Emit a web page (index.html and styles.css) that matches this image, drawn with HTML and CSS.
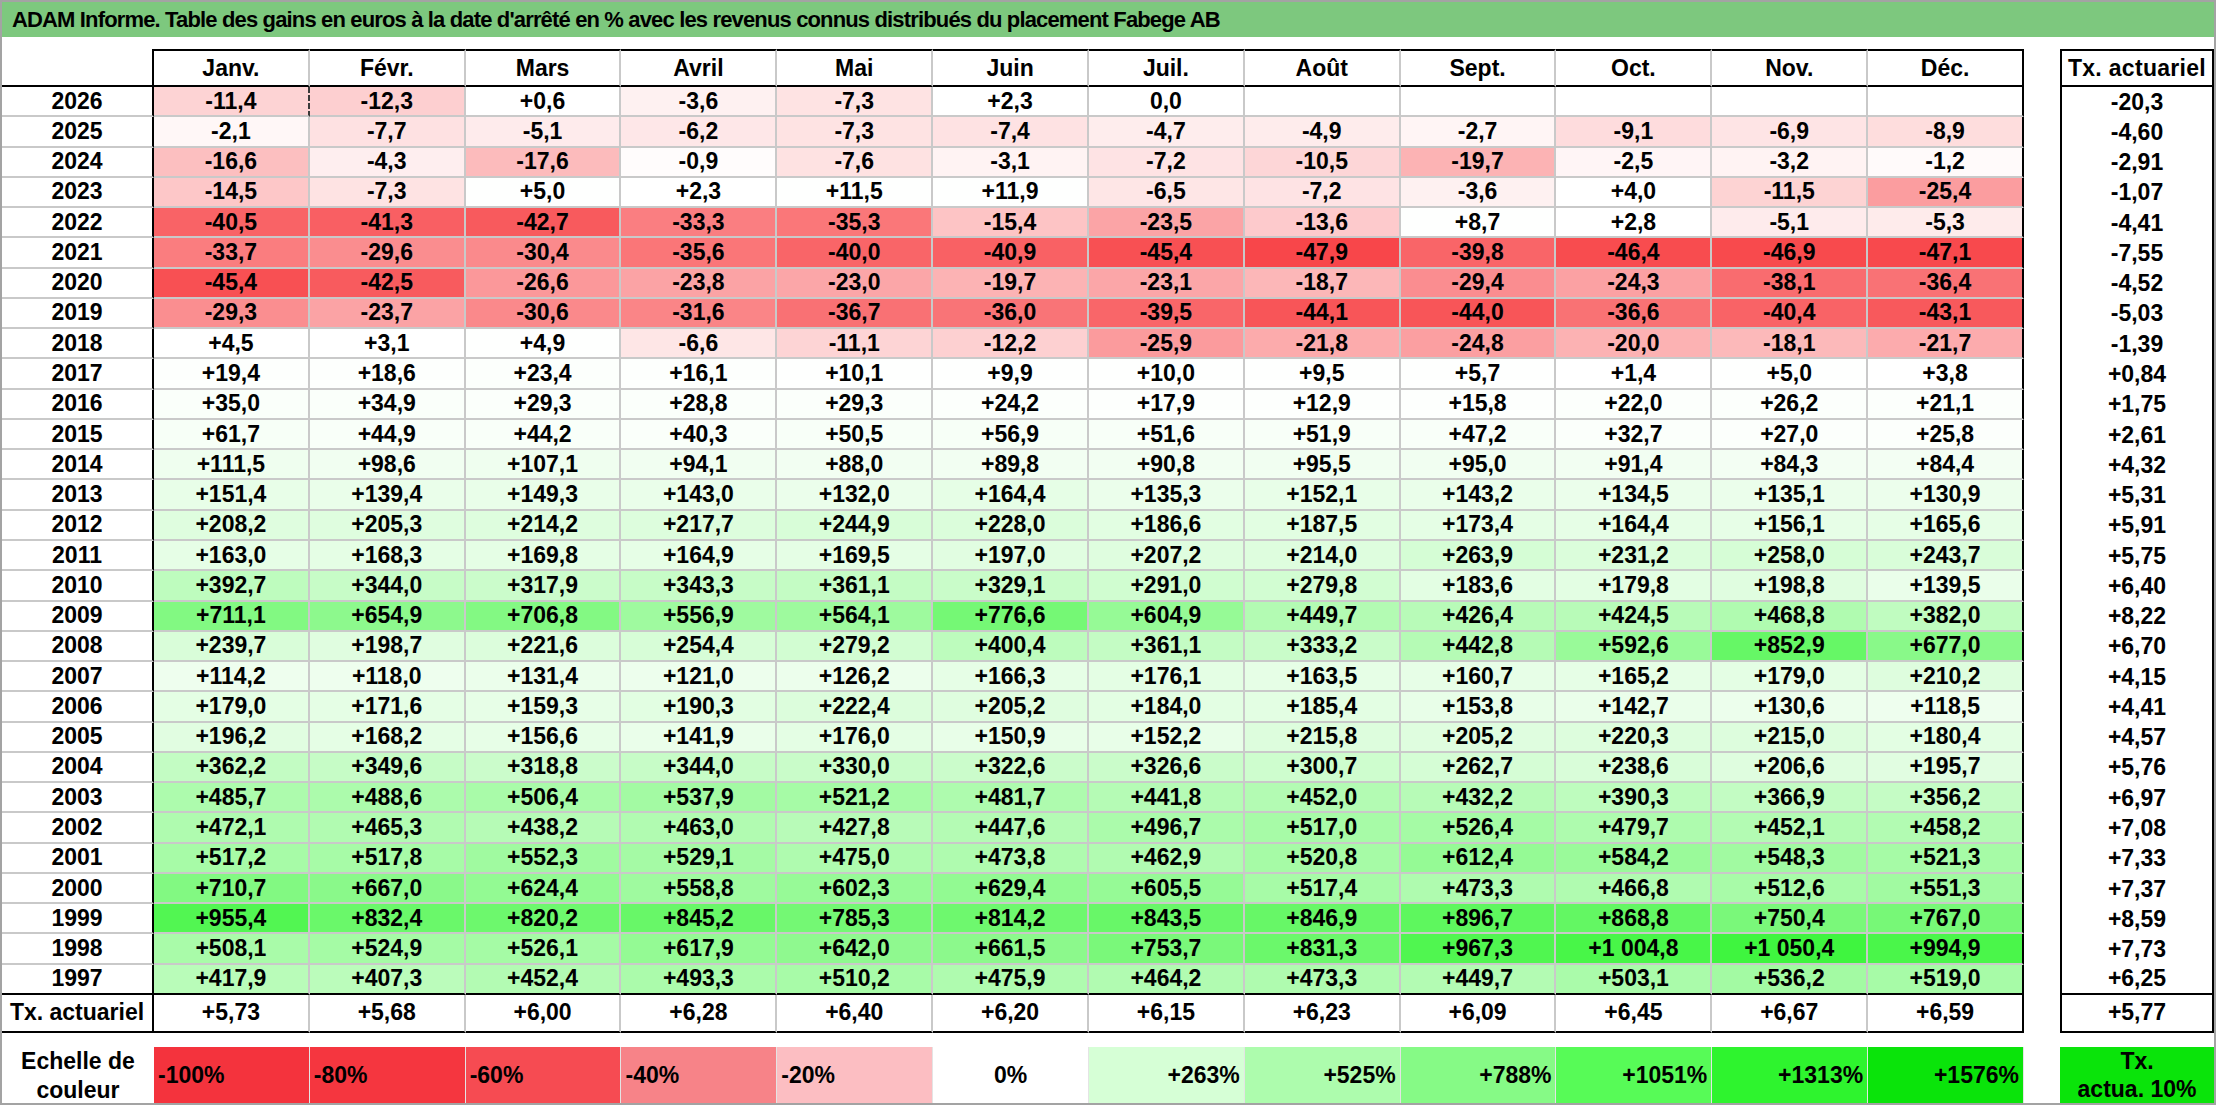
FILE: index.html
```html
<!DOCTYPE html>
<html lang="fr">
<head>
<meta charset="utf-8">
<title>ADAM Informe – Fabege AB</title>
<link rel="stylesheet" href="styles.css">
</head>
<body>
<div class="sheet">
  <div class="title">ADAM Informe. Table des gains en euros à la date d'arrêté en % avec les revenus connus distribués du placement Fabege AB</div>
  <div class="tables">
    <div class="main">
      <div class="row head"><div class="y"></div><div>Janv.</div><div>Févr.</div><div>Mars</div><div>Avril</div><div>Mai</div><div>Juin</div><div>Juil.</div><div>Août</div><div>Sept.</div><div>Oct.</div><div>Nov.</div><div>Déc.</div></div>
      <div class="row"><div class="y">2026</div><div class="v dash">-11,4</div><div class="v">-12,3</div><div class="v">+0,6</div><div class="v">-3,6</div><div class="v">-7,3</div><div class="v">+2,3</div><div class="v">0,0</div><div class="v"></div><div class="v"></div><div class="v"></div><div class="v"></div><div class="v"></div></div>
      <div class="row"><div class="y">2025</div><div class="v">-2,1</div><div class="v">-7,7</div><div class="v">-5,1</div><div class="v">-6,2</div><div class="v">-7,3</div><div class="v">-7,4</div><div class="v">-4,7</div><div class="v">-4,9</div><div class="v">-2,7</div><div class="v">-9,1</div><div class="v">-6,9</div><div class="v">-8,9</div></div>
      <div class="row"><div class="y">2024</div><div class="v">-16,6</div><div class="v">-4,3</div><div class="v">-17,6</div><div class="v">-0,9</div><div class="v">-7,6</div><div class="v">-3,1</div><div class="v">-7,2</div><div class="v">-10,5</div><div class="v">-19,7</div><div class="v">-2,5</div><div class="v">-3,2</div><div class="v">-1,2</div></div>
      <div class="row"><div class="y">2023</div><div class="v">-14,5</div><div class="v">-7,3</div><div class="v">+5,0</div><div class="v">+2,3</div><div class="v">+11,5</div><div class="v">+11,9</div><div class="v">-6,5</div><div class="v">-7,2</div><div class="v">-3,6</div><div class="v">+4,0</div><div class="v">-11,5</div><div class="v">-25,4</div></div>
      <div class="row"><div class="y">2022</div><div class="v">-40,5</div><div class="v">-41,3</div><div class="v">-42,7</div><div class="v">-33,3</div><div class="v">-35,3</div><div class="v">-15,4</div><div class="v">-23,5</div><div class="v">-13,6</div><div class="v">+8,7</div><div class="v">+2,8</div><div class="v">-5,1</div><div class="v">-5,3</div></div>
      <div class="row"><div class="y">2021</div><div class="v">-33,7</div><div class="v">-29,6</div><div class="v">-30,4</div><div class="v">-35,6</div><div class="v">-40,0</div><div class="v">-40,9</div><div class="v">-45,4</div><div class="v">-47,9</div><div class="v">-39,8</div><div class="v">-46,4</div><div class="v">-46,9</div><div class="v">-47,1</div></div>
      <div class="row"><div class="y">2020</div><div class="v">-45,4</div><div class="v">-42,5</div><div class="v">-26,6</div><div class="v">-23,8</div><div class="v">-23,0</div><div class="v">-19,7</div><div class="v">-23,1</div><div class="v">-18,7</div><div class="v">-29,4</div><div class="v">-24,3</div><div class="v">-38,1</div><div class="v">-36,4</div></div>
      <div class="row"><div class="y">2019</div><div class="v">-29,3</div><div class="v">-23,7</div><div class="v">-30,6</div><div class="v">-31,6</div><div class="v">-36,7</div><div class="v">-36,0</div><div class="v">-39,5</div><div class="v">-44,1</div><div class="v">-44,0</div><div class="v">-36,6</div><div class="v">-40,4</div><div class="v">-43,1</div></div>
      <div class="row"><div class="y">2018</div><div class="v">+4,5</div><div class="v">+3,1</div><div class="v">+4,9</div><div class="v">-6,6</div><div class="v">-11,1</div><div class="v">-12,2</div><div class="v">-25,9</div><div class="v">-21,8</div><div class="v">-24,8</div><div class="v">-20,0</div><div class="v">-18,1</div><div class="v">-21,7</div></div>
      <div class="row"><div class="y">2017</div><div class="v">+19,4</div><div class="v">+18,6</div><div class="v">+23,4</div><div class="v">+16,1</div><div class="v">+10,1</div><div class="v">+9,9</div><div class="v">+10,0</div><div class="v">+9,5</div><div class="v">+5,7</div><div class="v">+1,4</div><div class="v">+5,0</div><div class="v">+3,8</div></div>
      <div class="row"><div class="y">2016</div><div class="v">+35,0</div><div class="v">+34,9</div><div class="v">+29,3</div><div class="v">+28,8</div><div class="v">+29,3</div><div class="v">+24,2</div><div class="v">+17,9</div><div class="v">+12,9</div><div class="v">+15,8</div><div class="v">+22,0</div><div class="v">+26,2</div><div class="v">+21,1</div></div>
      <div class="row"><div class="y">2015</div><div class="v">+61,7</div><div class="v">+44,9</div><div class="v">+44,2</div><div class="v">+40,3</div><div class="v">+50,5</div><div class="v">+56,9</div><div class="v">+51,6</div><div class="v">+51,9</div><div class="v">+47,2</div><div class="v">+32,7</div><div class="v">+27,0</div><div class="v">+25,8</div></div>
      <div class="row"><div class="y">2014</div><div class="v">+111,5</div><div class="v">+98,6</div><div class="v">+107,1</div><div class="v">+94,1</div><div class="v">+88,0</div><div class="v">+89,8</div><div class="v">+90,8</div><div class="v">+95,5</div><div class="v">+95,0</div><div class="v">+91,4</div><div class="v">+84,3</div><div class="v">+84,4</div></div>
      <div class="row"><div class="y">2013</div><div class="v">+151,4</div><div class="v">+139,4</div><div class="v">+149,3</div><div class="v">+143,0</div><div class="v">+132,0</div><div class="v">+164,4</div><div class="v">+135,3</div><div class="v">+152,1</div><div class="v">+143,2</div><div class="v">+134,5</div><div class="v">+135,1</div><div class="v">+130,9</div></div>
      <div class="row"><div class="y">2012</div><div class="v">+208,2</div><div class="v">+205,3</div><div class="v">+214,2</div><div class="v">+217,7</div><div class="v">+244,9</div><div class="v">+228,0</div><div class="v">+186,6</div><div class="v">+187,5</div><div class="v">+173,4</div><div class="v">+164,4</div><div class="v">+156,1</div><div class="v">+165,6</div></div>
      <div class="row"><div class="y">2011</div><div class="v">+163,0</div><div class="v">+168,3</div><div class="v">+169,8</div><div class="v">+164,9</div><div class="v">+169,5</div><div class="v">+197,0</div><div class="v">+207,2</div><div class="v">+214,0</div><div class="v">+263,9</div><div class="v">+231,2</div><div class="v">+258,0</div><div class="v">+243,7</div></div>
      <div class="row"><div class="y">2010</div><div class="v">+392,7</div><div class="v">+344,0</div><div class="v">+317,9</div><div class="v">+343,3</div><div class="v">+361,1</div><div class="v">+329,1</div><div class="v">+291,0</div><div class="v">+279,8</div><div class="v">+183,6</div><div class="v">+179,8</div><div class="v">+198,8</div><div class="v">+139,5</div></div>
      <div class="row"><div class="y">2009</div><div class="v">+711,1</div><div class="v">+654,9</div><div class="v">+706,8</div><div class="v">+556,9</div><div class="v">+564,1</div><div class="v">+776,6</div><div class="v">+604,9</div><div class="v">+449,7</div><div class="v">+426,4</div><div class="v">+424,5</div><div class="v">+468,8</div><div class="v">+382,0</div></div>
      <div class="row"><div class="y">2008</div><div class="v">+239,7</div><div class="v">+198,7</div><div class="v">+221,6</div><div class="v">+254,4</div><div class="v">+279,2</div><div class="v">+400,4</div><div class="v">+361,1</div><div class="v">+333,2</div><div class="v">+442,8</div><div class="v">+592,6</div><div class="v">+852,9</div><div class="v">+677,0</div></div>
      <div class="row"><div class="y">2007</div><div class="v">+114,2</div><div class="v">+118,0</div><div class="v">+131,4</div><div class="v">+121,0</div><div class="v">+126,2</div><div class="v">+166,3</div><div class="v">+176,1</div><div class="v">+163,5</div><div class="v">+160,7</div><div class="v">+165,2</div><div class="v">+179,0</div><div class="v">+210,2</div></div>
      <div class="row"><div class="y">2006</div><div class="v">+179,0</div><div class="v">+171,6</div><div class="v">+159,3</div><div class="v">+190,3</div><div class="v">+222,4</div><div class="v">+205,2</div><div class="v">+184,0</div><div class="v">+185,4</div><div class="v">+153,8</div><div class="v">+142,7</div><div class="v">+130,6</div><div class="v">+118,5</div></div>
      <div class="row"><div class="y">2005</div><div class="v">+196,2</div><div class="v">+168,2</div><div class="v">+156,6</div><div class="v">+141,9</div><div class="v">+176,0</div><div class="v">+150,9</div><div class="v">+152,2</div><div class="v">+215,8</div><div class="v">+205,2</div><div class="v">+220,3</div><div class="v">+215,0</div><div class="v">+180,4</div></div>
      <div class="row"><div class="y">2004</div><div class="v">+362,2</div><div class="v">+349,6</div><div class="v">+318,8</div><div class="v">+344,0</div><div class="v">+330,0</div><div class="v">+322,6</div><div class="v">+326,6</div><div class="v">+300,7</div><div class="v">+262,7</div><div class="v">+238,6</div><div class="v">+206,6</div><div class="v">+195,7</div></div>
      <div class="row"><div class="y">2003</div><div class="v">+485,7</div><div class="v">+488,6</div><div class="v">+506,4</div><div class="v">+537,9</div><div class="v">+521,2</div><div class="v">+481,7</div><div class="v">+441,8</div><div class="v">+452,0</div><div class="v">+432,2</div><div class="v">+390,3</div><div class="v">+366,9</div><div class="v">+356,2</div></div>
      <div class="row"><div class="y">2002</div><div class="v">+472,1</div><div class="v">+465,3</div><div class="v">+438,2</div><div class="v">+463,0</div><div class="v">+427,8</div><div class="v">+447,6</div><div class="v">+496,7</div><div class="v">+517,0</div><div class="v">+526,4</div><div class="v">+479,7</div><div class="v">+452,1</div><div class="v">+458,2</div></div>
      <div class="row"><div class="y">2001</div><div class="v">+517,2</div><div class="v">+517,8</div><div class="v">+552,3</div><div class="v">+529,1</div><div class="v">+475,0</div><div class="v">+473,8</div><div class="v">+462,9</div><div class="v">+520,8</div><div class="v">+612,4</div><div class="v">+584,2</div><div class="v">+548,3</div><div class="v">+521,3</div></div>
      <div class="row"><div class="y">2000</div><div class="v">+710,7</div><div class="v">+667,0</div><div class="v">+624,4</div><div class="v">+558,8</div><div class="v">+602,3</div><div class="v">+629,4</div><div class="v">+605,5</div><div class="v">+517,4</div><div class="v">+473,3</div><div class="v">+466,8</div><div class="v">+512,6</div><div class="v">+551,3</div></div>
      <div class="row"><div class="y">1999</div><div class="v">+955,4</div><div class="v">+832,4</div><div class="v">+820,2</div><div class="v">+845,2</div><div class="v">+785,3</div><div class="v">+814,2</div><div class="v">+843,5</div><div class="v">+846,9</div><div class="v">+896,7</div><div class="v">+868,8</div><div class="v">+750,4</div><div class="v">+767,0</div></div>
      <div class="row"><div class="y">1998</div><div class="v">+508,1</div><div class="v">+524,9</div><div class="v">+526,1</div><div class="v">+617,9</div><div class="v">+642,0</div><div class="v">+661,5</div><div class="v">+753,7</div><div class="v">+831,3</div><div class="v">+967,3</div><div class="v">+1 004,8</div><div class="v">+1 050,4</div><div class="v">+994,9</div></div>
      <div class="row last"><div class="y">1997</div><div class="v">+417,9</div><div class="v">+407,3</div><div class="v">+452,4</div><div class="v">+493,3</div><div class="v">+510,2</div><div class="v">+475,9</div><div class="v">+464,2</div><div class="v">+473,3</div><div class="v">+449,7</div><div class="v">+503,1</div><div class="v">+536,2</div><div class="v">+519,0</div></div>
      <div class="row foot"><div class="y">Tx. actuariel</div><div>+5,73</div><div>+5,68</div><div>+6,00</div><div>+6,28</div><div>+6,40</div><div>+6,20</div><div>+6,15</div><div>+6,23</div><div>+6,09</div><div>+6,45</div><div>+6,67</div><div>+6,59</div></div>
    </div>
    <div class="tx">
      <div class="tx-head">Tx. actuariel</div>
      <div>-20,3</div><div>-4,60</div><div>-2,91</div><div>-1,07</div><div>-4,41</div><div>-7,55</div><div>-4,52</div><div>-5,03</div><div>-1,39</div><div>+0,84</div>
      <div>+1,75</div><div>+2,61</div><div>+4,32</div><div>+5,31</div><div>+5,91</div><div>+5,75</div><div>+6,40</div><div>+8,22</div><div>+6,70</div><div>+4,15</div>
      <div>+4,41</div><div>+4,57</div><div>+5,76</div><div>+6,97</div><div>+7,08</div><div>+7,33</div><div>+7,37</div><div>+8,59</div><div>+7,73</div><div class="tx-last">+6,25</div>
      <div class="tx-foot">+5,77</div>
    </div>
  </div>
  <div class="legend">
    <div class="scale">
      <div class="lab">Echelle de<br>couleur</div>
      <div class="sw neg s1">-100%</div>
      <div class="sw neg s2">-80%</div>
      <div class="sw neg s3">-60%</div>
      <div class="sw neg s4">-40%</div>
      <div class="sw neg s5">-20%</div>
      <div class="sw zero s6">0%</div>
      <div class="sw pos s7">+263%</div>
      <div class="sw pos s8">+525%</div>
      <div class="sw pos s9">+788%</div>
      <div class="sw pos s10">+1051%</div>
      <div class="sw pos s11">+1313%</div>
      <div class="sw pos s12">+1576%</div>
    </div>
    <div class="txleg">Tx.<br>actua. 10%</div>
  </div>
</div>
<script src="app.js"></script>
</body>
</html>
```

FILE: styles.css
```css
* { box-sizing: border-box; }
html, body { margin: 0; padding: 0; background: #ffffff; }
body {
  font-family: "Liberation Sans", Arial, sans-serif;
  font-weight: 700;
  color: #000000;
}
.sheet {
  width: 2216px;
  height: 1105px;
  border: 2px solid #a3a3a3;
  overflow: hidden;
  background: #fff;
}
.title {
  height: 35px;
  background: #7dc87e;
  font-size: 22px;
  letter-spacing: -0.85px;
  line-height: 35px;
  padding-left: 10px;
  white-space: nowrap;
}
.tables {
  display: flex;
  gap: 36px;
  margin-top: 12px;
}
.main {
  display: grid;
  width: 2022px;
  grid-template-columns: 152px repeat(12, 1fr);
  grid-template-rows: 38px repeat(30, 30.27px) 38px;
}
.row { display: contents; }
.main .row > div {
  display: flex;
  align-items: center;
  justify-content: center;
  font-size: 23px;
  white-space: nowrap;
  border-right: 2px solid #c9c9c9;
  border-bottom: 2px solid #c9c9c9;
  background: #fff;
}
.main .row > .y { border-right: 2px solid #000; }
.main .row > div:last-child { border-right: 2px solid #000; }
.main .row.head > div { border-top: 2px solid #000; border-bottom: 2px solid #000; }
.main .row.head > .y { border-top: none; }
.main .row.last > div { border-bottom: 2px solid #000; }
.main .row.foot > div { border-bottom: 2px solid #000; }
.main .row > .v.dash { border-right: 2px dashed #3a3a3a; }

.tx {
  display: grid;
  width: 154px;
  grid-template-rows: 36px repeat(30, 30.27px) 36px;
  border: 2px solid #000;
}
.tx > div {
  display: flex;
  align-items: center;
  justify-content: center;
  font-size: 23px;
  white-space: nowrap;
}
.tx > .tx-head { border-bottom: 2px solid #000; letter-spacing: 0.3px; }
.tx > .tx-last { border-bottom: 2px solid #000; }

.legend {
  display: flex;
  gap: 36px;
  margin-top: 14px;
  height: 56px;
}
.scale {
  display: grid;
  width: 2022px;
  grid-template-columns: 152px repeat(12, 1fr);
}
.lab {
  display: flex;
  align-items: center;
  justify-content: center;
  text-align: center;
  font-size: 23px;
  line-height: 29px;
}
.sw {
  display: flex;
  align-items: center;
  font-size: 23px;
  padding: 0 4px;
  border-right: 1px solid #e4e4e4;
  white-space: nowrap;
}
.sw.neg { justify-content: flex-start; }
.sw.zero { justify-content: center; }
.sw.pos { justify-content: flex-end; }
.s1 { background: #f4333d; }
.s2 { background: #f5363f; }
.s3 { background: #f64b52; }
.s4 { background: #f78388; }
.s5 { background: #fcbec2; }
.s6 { background: #ffffff; }
.s7 { background: #d6ffd6; }
.s8 { background: #adfcad; }
.s9 { background: #86fa86; }
.s10 { background: #57fb57; }
.s11 { background: #2ef42e; }
.s12 { background: #0ae40a; }
.txleg {
  width: 154px;
  background: #0ae40a;
  display: flex;
  align-items: center;
  justify-content: center;
  text-align: center;
  font-size: 23px;
  line-height: 28px;
}
```

FILE: app.js
```js
(function () {
  var cells = document.querySelectorAll('.main .v');
  for (var i = 0; i < cells.length; i++) {
    var el = cells[i];
    var t = el.textContent.replace(/\s/g, '').replace(',', '.');
    if (!t) continue;
    var v = parseFloat(t);
    if (isNaN(v) || v === 0) continue;
    var r, g, b, d;
    if (v < 0) {
      d = Math.min(1, -v / 47.9) * 185;
      r = 255 - d * 0.04;
      g = 255 - d;
      b = 255 - d * 0.98;
    } else {
      d = Math.pow(Math.min(1, v / 1050.4), 1.1) * 192;
      r = 255 - d;
      g = 255 - d * 0.05;
      b = 255 - d;
    }
    el.style.backgroundColor = 'rgb(' + Math.round(r) + ',' + Math.round(g) + ',' + Math.round(b) + ')';
  }
})();
```
